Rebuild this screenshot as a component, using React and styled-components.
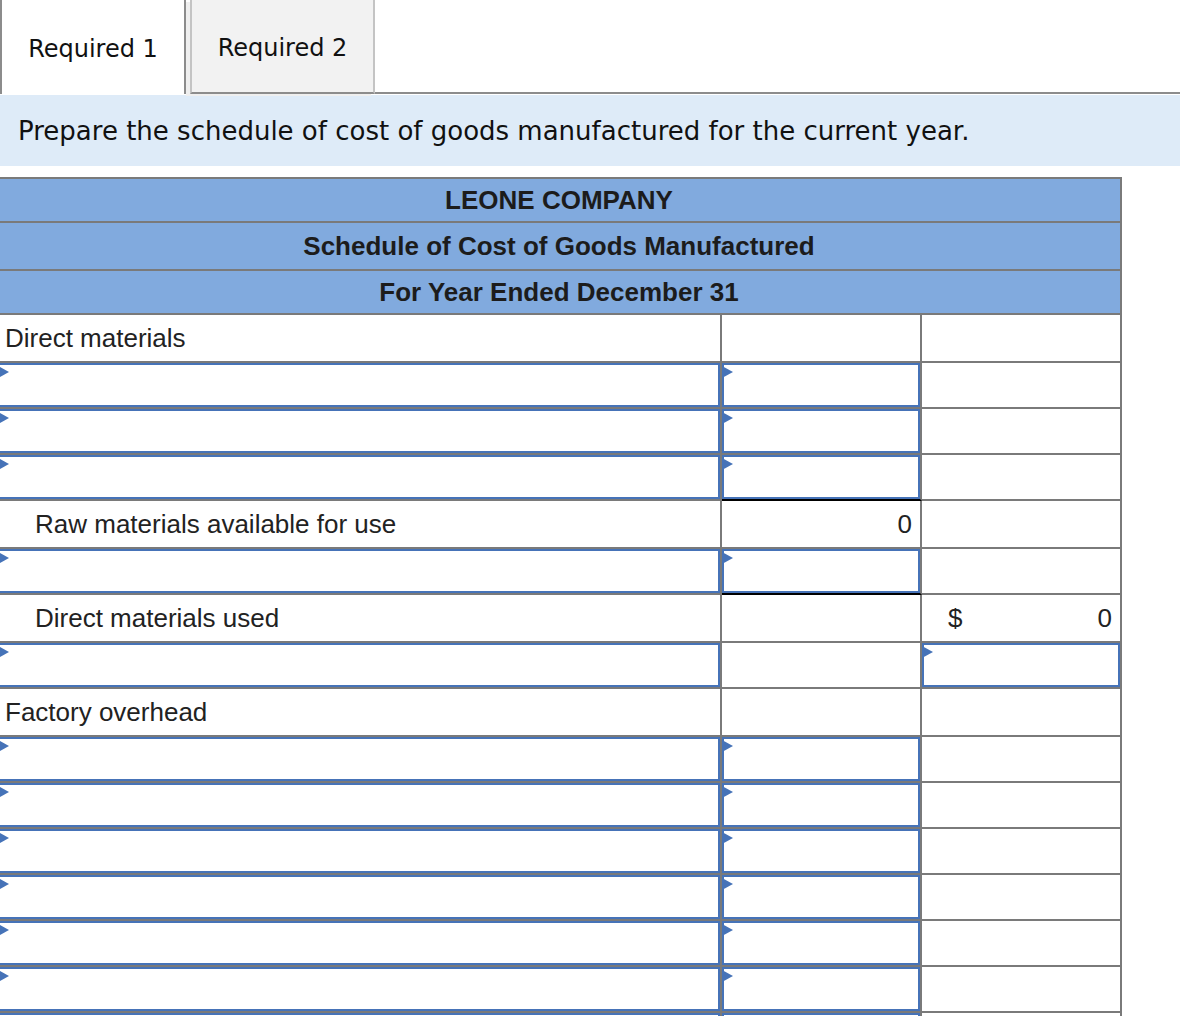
import React from "react";
import styled, { createGlobalStyle } from "styled-components";

const GlobalStyle = createGlobalStyle`
  body {
    margin: 0;
    background: #fff;
    font-family: "Liberation Sans", Arial, sans-serif;
    color: #222;
    overflow: hidden;
  }
`;

const GRID = "#7a7a7a";
const BLUE = "#4673b8";

const TabBar = styled.div`
  display: flex;
  height: 94px;
`;

const Tab = styled.div`
  box-sizing: border-box;
  width: ${(p) => p.$w}px;
  display: flex;
  align-items: center;
  justify-content: center;
  font-family: "DejaVu Sans", Verdana, sans-serif;
  font-size: 24px;
  color: #111;
  background: ${(p) => (p.$active ? "#fff" : "#f2f2f2")};
  border-left: 2px solid ${(p) => (p.$active ? "#8c8c8c" : "#c4c4c4")};
  border-right: 2px solid ${(p) => (p.$active ? "#8c8c8c" : "#c4c4c4")};
  border-bottom: ${(p) => (p.$active ? "none" : "2px solid #8c8c8c")};
  margin-left: ${(p) => (p.$active ? 0 : 4)}px;
  box-shadow: ${(p) => (p.$active ? "none" : "-4px 2px 0 #efefef")};
  padding-top: 3px;
`;

const TabRest = styled.div`
  flex: 1;
  border-bottom: 2px solid #8c8c8c;
`;

const Instruction = styled.div`
  height: 71px;
  margin-top: 1px;
  background: #deebf8;
  display: flex;
  align-items: center;
  padding-left: 18px;
  font-family: "DejaVu Sans", Verdana, sans-serif;
  font-size: 26px;
  color: #111;
`;

const Sheet = styled.div`
  width: 1124px;
  margin-top: 11px;
  margin-left: -2px;
  display: grid;
  grid-template-columns: 724px 200px 200px;
  border-top: 2px solid ${GRID};
`;

const HeadCell = styled.div`
  grid-column: 1 / -1;
  box-sizing: border-box;
  height: ${(p) => p.$h}px;
  background: #81aade;
  border-right: 2px solid ${GRID};
  border-bottom: 2px solid ${GRID};
  display: flex;
  align-items: center;
  justify-content: center;
  font-weight: bold;
  font-size: 26px;
  color: #1c1c1c;
`;

const Cell = styled.div`
  box-sizing: border-box;
  height: ${(p) => p.$h}px;
  border-right: 2px solid ${GRID};
  border-bottom: 2px solid ${(p) => (p.$under ? "#000" : GRID)};
  display: flex;
  align-items: center;
  justify-content: ${(p) => p.$justify || "flex-start"};
  padding: ${(p) => p.$pad || "0"};
  font-size: 26px;
  color: #222;
`;

const InputBox = styled.div`
  box-sizing: border-box;
  position: relative;
  width: 100%;
  height: 100%;
  border: 2px solid ${BLUE};

  &::before {
    content: "";
    position: absolute;
    left: -2px;
    top: 1px;
    width: 11px;
    height: 12px;
    background: ${BLUE};
    clip-path: polygon(0 0, 100% 50%, 0 100%);
  }
`;

const rows = [
  { label: "Direct materials" },
  { in1: true, in2: true },
  { in1: true, in2: true },
  { in1: true, in2: true, under2: true },
  { label: "Raw materials available for use", indent: true, v2: "0" },
  { in1: true, in2: true, under2: true },
  { label: "Direct materials used", indent: true, dollar: true, v3: "0" },
  { in1: true, in3: true },
  { label: "Factory overhead" },
  { in1: true, in2: true },
  { in1: true, in2: true },
  { in1: true, in2: true },
  { in1: true, in2: true },
  { in1: true, in2: true },
  { in1: true, in2: true },
  { in1: true, in2: true },
  { in1: true, in2: true },
];

const Row = ({ r }) => {
  if (r.label) {
    return (
      <>
        <Cell $h={48} $pad={r.indent ? "0 0 0 37px" : "0 0 0 7px"}>
          {r.label}
        </Cell>
        <Cell $h={48} $justify="flex-end" $pad="0 8px 0 0">
          {r.v2}
        </Cell>
        <Cell
          $h={48}
          $justify={r.dollar ? "space-between" : "flex-end"}
          $pad={r.dollar ? "0 8px 0 26px" : "0 8px 0 0"}
        >
          {r.dollar && <span>$</span>}
          {r.v3}
        </Cell>
      </>
    );
  }
  return (
    <>
      <Cell $h={46}>{r.in1 && <InputBox />}</Cell>
      <Cell $h={46} $under={r.under2}>
        {r.in2 && <InputBox />}
      </Cell>
      <Cell $h={46}>{r.in3 && <InputBox />}</Cell>
    </>
  );
};

export default function App() {
  return (
    <>
      <GlobalStyle />
      <TabBar>
        <Tab $active $w={186}>Required 1</Tab>
        <Tab $w={185}>Required 2</Tab>
        <TabRest />
      </TabBar>
      <Instruction>
        Prepare the schedule of cost of goods manufactured for the current year.
      </Instruction>
      <Sheet>
        <HeadCell $h={44}>LEONE COMPANY</HeadCell>
        <HeadCell $h={48}>Schedule of Cost of Goods Manufactured</HeadCell>
        <HeadCell $h={44}>For Year Ended December 31</HeadCell>
        {rows.map((r, i) => (
          <Row key={i} r={r} />
        ))}
      </Sheet>
    </>
  );
}
